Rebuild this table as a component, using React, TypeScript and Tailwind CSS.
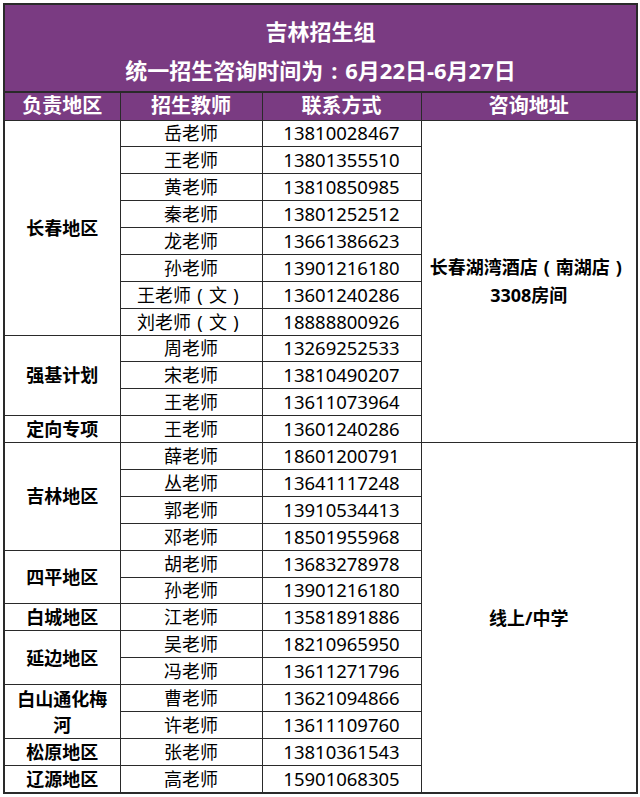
import React from "react";

type Row = { region?: { name: React.ReactNode; span: number }; teacher: React.ReactNode; phone: string; addr?: { text: React.ReactNode; span: number } };

const P = ({ c }: { c: string }) => <span className="inline-block w-[1em] text-center">{c}</span>;

const wen = (s: string) => (
  <>
    {s}
    <P c="(" />文<P c=")" />
  </>
);

const rows: Row[] = [
  {
    region: { name: "长春地区", span: 8 },
    teacher: "岳老师",
    phone: "13810028467",
    addr: {
      text: (
        <>
          长春湖湾酒店<P c="(" />南湖店<P c=")" />
          <br />
          3308房间
        </>
      ),
      span: 12,
    },
  },
  { teacher: "王老师", phone: "13801355510" },
  { teacher: "黄老师", phone: "13810850985" },
  { teacher: "秦老师", phone: "13801252512" },
  { teacher: "龙老师", phone: "13661386623" },
  { teacher: "孙老师", phone: "13901216180" },
  { teacher: wen("王老师"), phone: "13601240286" },
  { teacher: wen("刘老师"), phone: "18888800926" },
  { region: { name: "强基计划", span: 3 }, teacher: "周老师", phone: "13269252533" },
  { teacher: "宋老师", phone: "13810490207" },
  { teacher: "王老师", phone: "13611073964" },
  { region: { name: "定向专项", span: 1 }, teacher: "王老师", phone: "13601240286" },
  { region: { name: "吉林地区", span: 4 }, teacher: "薛老师", phone: "18601200791", addr: { text: "线上/中学", span: 13 } },
  { teacher: "丛老师", phone: "13641117248" },
  { teacher: "郭老师", phone: "13910534413" },
  { teacher: "邓老师", phone: "18501955968" },
  { region: { name: "四平地区", span: 2 }, teacher: "胡老师", phone: "13683278978" },
  { teacher: "孙老师", phone: "13901216180" },
  { region: { name: "白城地区", span: 1 }, teacher: "江老师", phone: "13581891886" },
  { region: { name: "延边地区", span: 2 }, teacher: "吴老师", phone: "18210965950" },
  { teacher: "冯老师", phone: "13611271796" },
  { region: { name: <>白山通化梅<br />河</>, span: 2 }, teacher: "曹老师", phone: "13621094866" },
  { teacher: "许老师", phone: "13611109760" },
  { region: { name: "松原地区", span: 1 }, teacher: "张老师", phone: "13810361543" },
  { region: { name: "辽源地区", span: 1 }, teacher: "高老师", phone: "15901068305" },
];

const font = { fontFamily: '"Noto Sans", "Noto Sans CJK SC", sans-serif' };

export default function App() {
  return (
    <div className="w-[640px] h-[797px] bg-white pl-[3px] pt-[3px]" style={font}>
      <table className="w-[633px] table-fixed border-collapse border-2 border-[#2a2a2a]">
        <colgroup>
          <col className="w-[116px]" />
          <col className="w-[142px]" />
          <col className="w-[159px]" />
          <col className="w-[216px]" />
        </colgroup>
        <tbody>
          <tr className="h-[88px] bg-[#7a3b82]">
            <td colSpan={4} className="border-2 border-[#2a2a2a] text-center text-white font-bold text-[22px] leading-[39px] align-middle pt-[6px]">
              <div>吉林招生组</div>
              <div>
                统一招生咨询时间为<P c=":" />6月22日-6月27日
              </div>
            </td>
          </tr>
          <tr className="h-[28px] bg-[#7a3b82] text-white font-bold text-[20px] leading-[26px]">
            <td className="border-[1.5px] border-[#2a2a2a] text-center">负责地区</td>
            <td className="border-[1.5px] border-[#2a2a2a] text-center">招生教师</td>
            <td className="border-[1.5px] border-[#2a2a2a] text-center">联系方式</td>
            <td className="border-[1.5px] border-[#2a2a2a] text-center">咨询地址</td>
          </tr>
          {rows.map((r, i) => (
            <tr key={i} className="h-[26.88px] text-black text-[18px] leading-[24px]">
              {r.region && (
                <td rowSpan={r.region.span} className="border-[1.5px] border-[#2a2a2a] text-center font-bold px-[4px] leading-[26px]">
                  {r.region.name}
                </td>
              )}
              <td className="border-[1.5px] border-[#2a2a2a] text-center p-0">{r.teacher}</td>
              <td className="border-[1.5px] border-[#2a2a2a] text-center p-0 text-[18.5px]">{r.phone}</td>
              {r.addr && (
                <td rowSpan={r.addr.span} className="border-[1.5px] border-[#2a2a2a] text-center font-bold leading-[28px]">
                  {r.addr.text}
                </td>
              )}
            </tr>
          ))}
        </tbody>
      </table>
    </div>
  );
}
